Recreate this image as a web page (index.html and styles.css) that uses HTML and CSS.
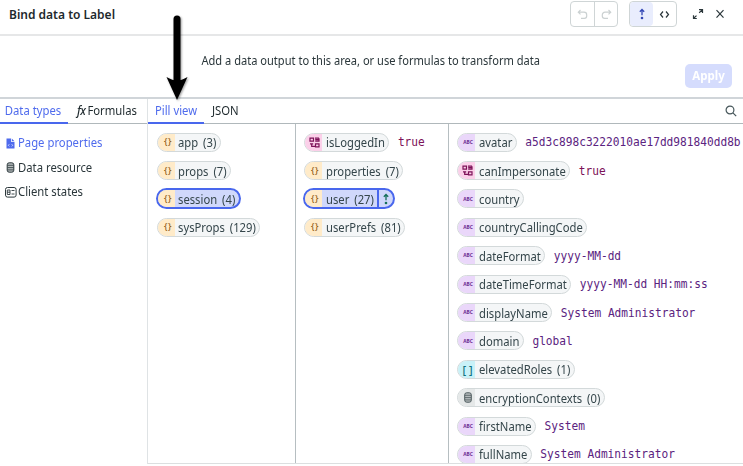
FILE: index.html
```html
<!DOCTYPE html>
<html lang="en">
<head>
<meta charset="utf-8">
<title>Bind data to Label</title>
<link rel="stylesheet" href="styles.css">
</head>
<body>
<svg class="defs" aria-hidden="true">
  <symbol id="bool" viewBox="0 0 11 11"><path d="M1 1.200h3.500v3H1zM6 1.200h4M10 1.200v3H6.200M6.200 2.700H10M1 6.800h3.200M2.700 6.800v2.500h3.500M6.500 6.800H10v3H6.500z" fill="none" stroke="currentColor" stroke-width="1.200"/></symbol>
  <symbol id="db" viewBox="0 0 8 11"><rect x=".7" y=".8" width="6.600" height="9.400" rx="2" fill="#b4babb" stroke="currentColor" stroke-width="1"/><path d="M1 3.300h6M1 5.600h6M1 7.900h6" stroke="currentColor" stroke-width=".8"/></symbol>
  <symbol id="up" viewBox="0 0 8 12"><path d="M4 7.300V1.800M1.800 3.800 4 1.500 6.200 3.800" fill="none" stroke="currentColor" stroke-width="1.300"/><circle cx="4" cy="10" r="1.300" fill="currentColor" stroke="none"/></symbol>
</svg>
<div class="dialog">
  <header class="header">
    <h1 class="title">Bind data to Label</h1>
    <div class="group history">
      <span class="btn"><svg width="11" height="11" viewBox="0 0 11 11"><path d="M3.500 1 1.300 3.200l2.200 2.200M1.500 3.200H7a2.700 2.700 0 0 1 2.700 2.700V7A2.300 2.300 0 0 1 7.400 9.300H4"/></svg></span>
      <span class="btn"><svg width="11" height="11" viewBox="0 0 11 11"><path d="m7.500 1 2.200 2.200-2.200 2.200M9.500 3.200H4a2.700 2.700 0 0 0-2.700 2.700V7a2.300 2.300 0 0 0 2.300 2.300H7"/></svg></span>
    </div>
    <div class="group mode">
      <span class="btn active"><svg width="8" height="12"><use href="#up"/></svg></span>
      <span class="btn"><svg width="11" height="9" viewBox="0 0 11 9"><path d="M4 1.500 1.500 4.500 4 7.500M7 1.500l2.500 3L7 7.500"/></svg></span>
    </div>
    <svg class="expand" width="12" height="12" viewBox="0 0 12 12"><path d="M7 1.700h3.500v3.200M10.300 1.900 7.200 4.800M1.500 7.200v3.300h3.300M1.700 10.300l2.800-2.700"/></svg>
    <svg class="close" width="10" height="10" viewBox="0 0 10 10"><path d="m1.500 1.200 7 7.400M8.500 1.200l-7 7.400"/></svg>
  </header>
  <section class="dropzone">
    <p class="hint">Add a data output to this area, or use formulas to transform data</p>
    <button class="apply"><span class="t">Apply</span></button>
  </section>
  <main class="main">
    <aside class="side">
      <nav class="tabs">
        <span class="tab types on"><span class="t">Data types</span></span>
        <span class="tab formulas"><span class="t"><i class="fx">fx</i>Formulas</span></span>
      </nav>
      <ul class="menu">
        <li class="sel"><svg width="9" height="11" viewBox="0 0 9 11"><path d="M.5.500h4.700V4h3.300v6.500h-8zM6 .7l2.500 2.500H6z" fill="currentColor"/><path d="M3.300 6.200 2.300 7.300l1 1.100M5.700 6.200l1 1.100-1 1.100" fill="none" stroke="#fff" stroke-width=".7"/></svg><span class="t">Page properties</span></li>
        <li><svg width="9" height="11"><use href="#db"/></svg><span class="t">Data resource</span></li>
        <li class="client"><svg width="12" height="11" viewBox="0 0 12 11"><rect x=".5" y=".5" width="10.600" height="9.600" rx="2" fill="none" stroke="currentColor"/><path d="M2.300 3h2.700v4.500H2.300zM2.300 5.200H5M6.500 3.500h3M6.500 7h3" fill="none" stroke="currentColor" stroke-width=".9"/></svg><span class="t">Client states</span></li>
      </ul>
    </aside>
    <section class="view">
      <nav class="tabs">
        <span class="tab pillview on"><span class="t">Pill view</span></span>
        <span class="tab json"><span class="t">JSON</span></span>
        <svg class="search" width="12" height="12" viewBox="0 0 12 12"><circle cx="5" cy="5" r="3.900"/><path d="m7.900 7.900 3.300 3.300"/></svg>
      </nav>
      <div class="columns">
        <div class="col">
          <div class="row"><span class="pill obj"><b>{}</b><span class="t">app (3)</span></span></div>
          <div class="row"><span class="pill obj"><b>{}</b><span class="t">props (7)</span></span></div>
          <div class="row"><span class="pill obj picked"><b>{}</b><span class="t">session (4)</span></span></div>
          <div class="row"><span class="pill obj"><b>{}</b><span class="t">sysProps (129)</span></span></div>
        </div>
        <div class="col">
          <div class="row"><span class="pill bool"><b><svg width="11" height="11"><use href="#bool"/></svg></b><span class="t">isLoggedIn</span></span><code class="truth">true</code></div>
          <div class="row"><span class="pill obj"><b>{}</b><span class="t">properties (7)</span></span></div>
          <div class="row"><span class="pill obj picked"><b>{}</b><span class="t">user (27)</span><span class="insert"><svg width="8" height="12"><use href="#up"/></svg></span></span></div>
          <div class="row"><span class="pill obj"><b>{}</b><span class="t">userPrefs (81)</span></span></div>
        </div>
        <div class="col">
          <div class="row"><span class="pill str"><b>ABC</b><span class="t">avatar</span></span><code>a5d3c898c3222010ae17dd981840dd8b</code></div>
          <div class="row"><span class="pill bool"><b><svg width="11" height="11"><use href="#bool"/></svg></b><span class="t">canImpersonate</span></span><code class="truth">true</code></div>
          <div class="row"><span class="pill str"><b>ABC</b><span class="t">country</span></span></div>
          <div class="row"><span class="pill str"><b>ABC</b><span class="t">countryCallingCode</span></span></div>
          <div class="row"><span class="pill str"><b>ABC</b><span class="t">dateFormat</span></span><code>yyyy-MM-dd</code></div>
          <div class="row"><span class="pill str"><b>ABC</b><span class="t">dateTimeFormat</span></span><code>yyyy-MM-dd HH:mm:ss</code></div>
          <div class="row"><span class="pill str"><b>ABC</b><span class="t">displayName</span></span><code>System Administrator</code></div>
          <div class="row"><span class="pill str"><b>ABC</b><span class="t">domain</span></span><code>global</code></div>
          <div class="row"><span class="pill arr"><b>[ ]</b><span class="t">elevatedRoles (1)</span></span></div>
          <div class="row"><span class="pill data"><b><svg width="8" height="11"><use href="#db"/></svg></b><span class="t">encryptionContexts (0)</span></span></div>
          <div class="row"><span class="pill str"><b>ABC</b><span class="t">firstName</span></span><code>System</code></div>
          <div class="row"><span class="pill str"><b>ABC</b><span class="t">fullName</span></span><code>System Administrator</code></div>
        </div>
      </div>
    </section>
  </main>
  <svg class="arrow" width="32" height="96" viewBox="0 0 32 96"><path d="M16 6v66" stroke="#000" stroke-width="7" stroke-linecap="round"/><path d="M5.500 64q6 3.500 10.500 3.500T26.500 64L16 87z" fill="#000"/></svg>
</div>
</body>
</html>
```

FILE: styles.css
```css
* { box-sizing: border-box; }
body {
  margin: 0;
  width: 743px;
  height: 466px;
  overflow: hidden;
  background: #fff;
  color: #2b373b;
  font: 11.3px/16px "Noto Sans", sans-serif;
}
.defs { display: none; }
svg { flex: none; }
.dialog { position: relative; height: 466px; display: flex; flex-direction: column; }

/* Text is drawn slightly taller than its natural proportions. */
.t, .title, .hint, code { display: inline-block; transform: scaleY(1.13); white-space: pre; }

.header {
  height: 36px;
  flex: none;
  display: flex;
  align-items: center;
  padding: 0 18px 6px 9px;
  border-bottom: 2px solid #e6e7e8;
  color: #2b373b;
}
.header svg { fill: none; stroke: currentColor; stroke-width: 1.2; }
.title { margin: 0 auto 0 0; font-size: 12px; font-weight: 600; color: #1e292d; transform: translateY(1px) scaleY(1.05); }
.group { display: flex; height: 26px; border: 1px solid #cfd5d6; border-radius: 4px; }
.btn { width: 23px; display: flex; align-items: center; justify-content: center; }
.history { color: #cbd1d2; margin-right: 11px; }
.history .btn + .btn { border-left: 1px solid #cfd5d6; }
.mode { margin-right: 15px; }
.mode .active { background: #e9edfd; color: #3348b5; border-radius: 4px; }
.expand { margin-right: 11px; }

.dropzone {
  height: 61px;
  flex: none;
  position: relative;
  display: flex;
  justify-content: flex-end;
  padding: 28px 11px 0 0;
}
.hint { margin: -12px 145px 0 0; height: 16px; font-size: 11.1px; }
.apply {
  width: 47px;
  height: 24px;
  padding: 0 0 2px;
  border: 0;
  border-radius: 5px;
  background: #d5dcfd;
  color: #fff;
  font: 700 11.5px/16px "Noto Sans", sans-serif;
}

.main { display: flex; height: 367px; flex: none; border-top: 2px solid #d0d5d9; }
.side { width: 148px; flex: none; border-right: 1px solid #dfe3e5; }
.tabs { display: flex; height: 25px; border-bottom: 1px solid #b0b8bb; }
.tab { height: 25px; padding-top: 3px; text-align: center; color: #1e292d; }
.on { color: #4f6bed; border-bottom: 2px solid #4967ed; }
.types { width: 68px; padding-right: 2px; }
.formulas { padding-left: 9px; }
.fx { font-weight: 500; margin-right: 2px; letter-spacing: -.5px; }
.menu { list-style: none; margin: 0; padding: 10px 0 0 6px; }
.menu li { display: flex; align-items: center; height: 16px; margin-bottom: 8.5px; gap: 3px; }
.menu .sel { color: #4f6bed; }
.menu svg { position: relative; top: 1px; }
.menu .client { gap: 1px; margin-left: -1px; }

.view { flex: 1; min-width: 0; border-bottom: 1px solid #dcdfe0; }
.pillview { width: 56px; }
.json { margin-left: 8px; }
.search { margin: 6px 6px 0 auto; fill: none; stroke: #46565a; stroke-width: 1.2; }
.columns { display: grid; grid-template-columns: 148px 153px 1fr; height: 339px; overflow: hidden; }
.col { padding: 4px 0 0 8px; border-right: 1px solid #b6bec1; min-width: 0; }
.col:first-child { padding-left: 9px; }
.col:first-child .pill b { margin-right: 3px; }
.col:last-child { border: 0; }
.row { height: 28.4px; display: flex; align-items: center; }
.pill {
  height: 19px;
  display: flex;
  align-items: center;
  overflow: hidden;
  flex: none;
  border: 1px solid #d3d9da;
  border-radius: 10px;
  background: #f4f6f7;
  padding-right: 3.5px;
  color: #34454a;
  word-spacing: 2px;
}
.pill .t { font-size: 11.25px; }
.pill b {
  width: 17px;
  align-self: stretch;
  margin-right: 4px;
  display: flex;
  align-items: center;
  justify-content: center;
  font-size: 9px;
  line-height: 1;
  word-spacing: 0;
}
.obj b { background: #ffebc9; color: #946019; font-weight: 500; letter-spacing: .6px; padding: 0 0 1px 3px; }
.bool b { background: #fbd0e9; color: #7d1258; padding-left: 2px; }
.str b { background: #ead7fa; color: #6b2b91; font-size: 4.8px; padding-left: 3px; }
.arr b { background: #c9f1f7; color: #11707e; font-size: 11px; font-weight: 500; padding-left: 2px; }
.data b { background: #e5e8e8; color: #4c595c; padding-left: 3px; }
.picked { height: 21px; margin-left: -1px; border: 2px solid #4967ed; border-radius: 11px; background: #d0d8fb; }
.insert { align-self: stretch; display: flex; align-items: center; margin-left: 3px; padding: 0 0 0 3px; border-left: 2px solid #4967ed; color: #16705a; }
code { margin-left: 8.5px; font: 11.18px/16px "DejaVu Sans Mono", monospace; color: #5b2380; transform: translateY(1px) scaleY(1.13); }
.truth { color: #7d1258; }

.arrow { position: absolute; left: 160.5px; top: 13px; filter: drop-shadow(1px 1px 1px rgba(0, 0, 0, .4)); }
```
